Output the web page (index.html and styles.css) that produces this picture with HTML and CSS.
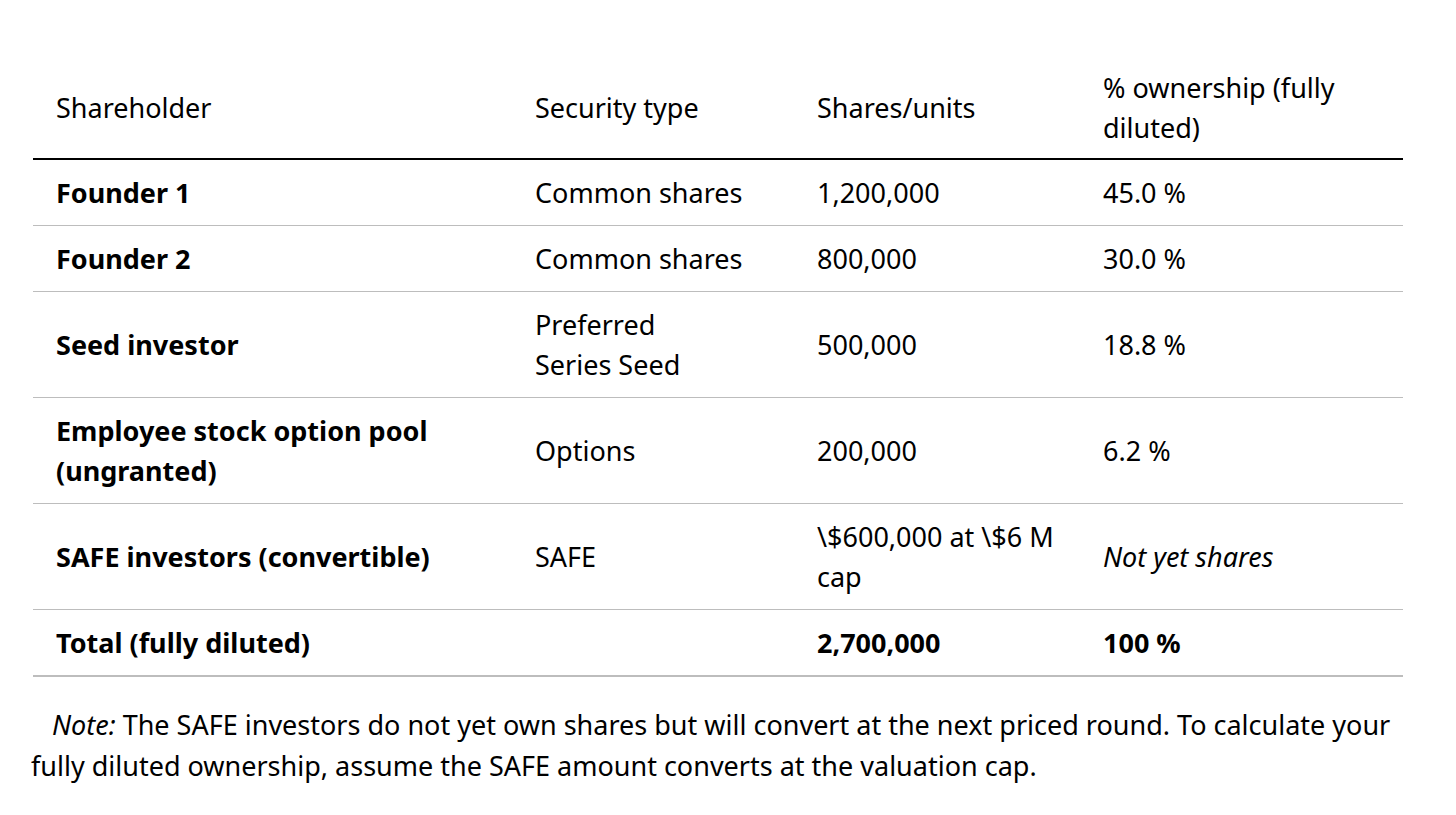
FILE: index.html
```html
<!DOCTYPE html>
<html>
<head>
<meta charset="utf-8">
<link rel="stylesheet" href="styles.css">
</head>
<body>
<div class="page">
  <table class="cap">
    <colgroup>
      <col class="c1"><col class="c2"><col class="c3"><col class="c4">
    </colgroup>
    <thead>
      <tr>
        <th>Shareholder</th>
        <th>Security type</th>
        <th>Shares/units</th>
        <th>% ownership (fully diluted)</th>
      </tr>
    </thead>
    <tbody>
      <tr><td><strong>Founder 1</strong></td><td>Common shares</td><td>1,200,000</td><td>45.0 %</td></tr>
      <tr><td><strong>Founder 2</strong></td><td>Common shares</td><td>800,000</td><td>30.0 %</td></tr>
      <tr><td><strong>Seed investor</strong></td><td>Preferred<br>Series Seed</td><td>500,000</td><td>18.8 %</td></tr>
      <tr><td><strong>Employee stock option pool (ungranted)</strong></td><td>Options</td><td>200,000</td><td>6.2 %</td></tr>
      <tr><td><strong>SAFE investors (convertible)</strong></td><td>SAFE</td><td>\$600,000 at \$6 M cap</td><td><em>Not yet shares</em></td></tr>
      <tr class="total"><td><strong>Total (fully diluted)</strong></td><td></td><td><strong>2,700,000</strong></td><td><strong>100 %</strong></td></tr>
    </tbody>
  </table>
  <p class="note"><em>Note:</em> The SAFE investors do not yet own shares but will convert at the next priced round. To calculate your fully diluted ownership, assume the SAFE amount converts at the valuation cap.</p>
</div>
</body>
</html>
```

FILE: styles.css
```css
html, body {
  margin: 0;
  padding: 0;
  background: #fff;
}
body {
  font-family: "Noto Sans", "Open Sans", sans-serif;
  font-size: 27px;
  line-height: 40px;
  color: #000;
}
.page {
  padding: 55px 51px 0 31px;
  width: 1374px;
}
.cap {
  width: 1370px;
  margin-left: 2px;
  border-collapse: collapse;
  table-layout: fixed;
}
.c1 { width: 479px; }
.c2 { width: 282px; }
.c3 { width: 286px; }
.c4 { width: 323px; }
.cap th {
  font-weight: 400;
  text-align: left;
  padding: 13px 23px 10px 23px;
  border-bottom: 2px solid #000;
}
.cap td {
  padding: 13px 23px 12px 23px;
  border-bottom: 1px solid #bdbdbd;
  vertical-align: middle;
}
.cap strong { font-weight: 700; }
.cap tr.total td {
  border-bottom: 2px solid #bdbdbd;
}
.note {
  margin: 27px 0 0 0;
  text-indent: 21px;
  line-height: 41px;
}
```
